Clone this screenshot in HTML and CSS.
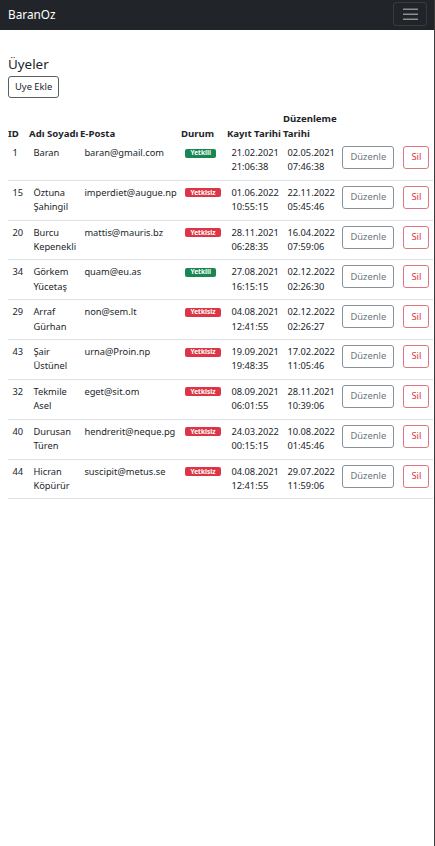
FILE: index.html
```html
<!DOCTYPE html>
<html lang="tr">
<head>
<meta charset="utf-8">
<title>BaranOz</title>
<link rel="stylesheet" href="styles.css">
</head>
<body>
<nav class="navbar">
  <span class="brand">BaranOz</span>
  <button class="toggler" type="button" aria-label="Menü">
    <svg width="15" height="12" viewBox="0 0 15 12"><path d="M0 1.3h15M0 6.3h15M0 11.3h15" stroke="#8b8d90" stroke-width="1.6"/></svg>
  </button>
</nav>
<main class="container">
  <h4 class="title">Üyeler</h4>
  <button class="btn btn-dark-outline" type="button">Uye Ekle</button>
  <table class="table">
    <colgroup>
      <col class="c-id"><col class="c-name"><col class="c-mail"><col class="c-state"><col class="c-date"><col class="c-date2"><col class="c-edit"><col class="c-del">
    </colgroup>
    <thead>
      <tr>
        <th>ID</th><th>Adı Soyadı</th><th>E-Posta</th><th>Durum</th><th>Kayıt Tarihi</th><th class="wrap">Düzenleme Tarihi</th><th></th><th></th>
      </tr>
    </thead>
    <tbody>
      <tr><td>1</td><td>Baran</td><td class="nw">baran@gmail.com</td><td><span class="badge ok">Yetkili</span></td><td class="nw">21.02.2021<br>21:06:38</td><td class="nw">02.05.2021<br>07:46:38</td><td><button class="btn btn-grey" type="button">Düzenle</button></td><td><button class="btn btn-red" type="button">Sil</button></td></tr>
      <tr><td>15</td><td>Öztuna Şahingil</td><td class="nw">imperdiet@augue.np</td><td><span class="badge no">Yetkisiz</span></td><td class="nw">01.06.2022<br>10:55:15</td><td class="nw">22.11.2022<br>05:45:46</td><td><button class="btn btn-grey" type="button">Düzenle</button></td><td><button class="btn btn-red" type="button">Sil</button></td></tr>
      <tr><td>20</td><td>Burcu Kepenekli</td><td class="nw">mattis@mauris.bz</td><td><span class="badge no">Yetkisiz</span></td><td class="nw">28.11.2021<br>06:28:35</td><td class="nw">16.04.2022<br>07:59:06</td><td><button class="btn btn-grey" type="button">Düzenle</button></td><td><button class="btn btn-red" type="button">Sil</button></td></tr>
      <tr><td>34</td><td>Görkem Yücetaş</td><td class="nw">quam@eu.as</td><td><span class="badge ok">Yetkili</span></td><td class="nw">27.08.2021<br>16:15:15</td><td class="nw">02.12.2022<br>02:26:30</td><td><button class="btn btn-grey" type="button">Düzenle</button></td><td><button class="btn btn-red" type="button">Sil</button></td></tr>
      <tr><td>29</td><td>Arraf Gürhan</td><td class="nw">non@sem.lt</td><td><span class="badge no">Yetkisiz</span></td><td class="nw">04.08.2021<br>12:41:55</td><td class="nw">02.12.2022<br>02:26:27</td><td><button class="btn btn-grey" type="button">Düzenle</button></td><td><button class="btn btn-red" type="button">Sil</button></td></tr>
      <tr><td>43</td><td>Şair Üstünel</td><td class="nw">urna@Proin.np</td><td><span class="badge no">Yetkisiz</span></td><td class="nw">19.09.2021<br>19:48:35</td><td class="nw">17.02.2022<br>11:05:46</td><td><button class="btn btn-grey" type="button">Düzenle</button></td><td><button class="btn btn-red" type="button">Sil</button></td></tr>
      <tr><td>32</td><td>Tekmile Asel</td><td class="nw">eget@sit.om</td><td><span class="badge no">Yetkisiz</span></td><td class="nw">08.09.2021<br>06:01:55</td><td class="nw">28.11.2021<br>10:39:06</td><td><button class="btn btn-grey" type="button">Düzenle</button></td><td><button class="btn btn-red" type="button">Sil</button></td></tr>
      <tr><td>40</td><td>Durusan Türen</td><td class="nw">hendrerit@neque.pg</td><td><span class="badge no">Yetkisiz</span></td><td class="nw">24.03.2022<br>00:15:15</td><td class="nw">10.08.2022<br>01:45:46</td><td><button class="btn btn-grey" type="button">Düzenle</button></td><td><button class="btn btn-red" type="button">Sil</button></td></tr>
      <tr><td>44</td><td>Hicran Köpürür</td><td class="nw">suscipit@metus.se</td><td><span class="badge no">Yetkisiz</span></td><td class="nw">04.08.2021<br>12:41:55</td><td class="nw">29.07.2022<br>11:59:06</td><td><button class="btn btn-grey" type="button">Düzenle</button></td><td><button class="btn btn-red" type="button">Sil</button></td></tr>
    </tbody>
  </table>
</main>
</body>
</html>
```

FILE: styles.css
```css
* { box-sizing: border-box; }
html, body { margin: 0; padding: 0; }
body {
  font-family: "Segoe UI", "Noto Sans", "Open Sans", sans-serif;
  font-size: 9.6px;
  line-height: 1.5;
  color: #212529;
  background: #fff;
  min-height: 100vh;
  border-right: 1px solid #3c3c3c;
}
.navbar {
  height: 30px;
  background: #212529;
  display: flex;
  align-items: flex-start;
  justify-content: space-between;
  padding: 2px 7px 0 8px;
}
.brand {
  color: #fff;
  font-size: 11.8px;
  line-height: 24px;
}
.toggler {
  width: 34px;
  height: 24px;
  padding: 0;
  background: transparent;
  border: 1px solid rgba(255, 255, 255, 0.1);
  border-radius: 3px;
  display: flex;
  align-items: center;
  justify-content: center;
}
.toggler svg { display: block; }
.container {
  padding: 0 8px;
}
.title {
  font-size: 13.4px;
  font-weight: 400;
  line-height: 17px;
  margin: 26px 0 3px;
}
.btn {
  display: inline-block;
  font-family: inherit;
  font-size: 9.4px;
  line-height: 14.4px;
  padding: 3px 7px;
  background: transparent;
  border: 1px solid;
  border-radius: 3px;
  cursor: pointer;
}
.btn-dark-outline {
  color: #212529;
  border-color: #5a5e63;
  padding: 3px 6px;
  height: 22px;
}
.btn-grey { color: #6c757d; border-color: #8a9096; vertical-align: top; height: 23px; padding: 3px 7px; }
.btn-red { color: #dc3545; border-color: #e07580; vertical-align: top; height: 23px; padding: 3px 7px; }
.table {
  margin-top: 13px;
  width: 425px;
  table-layout: fixed;
  border-collapse: collapse;
}
.c-id { width: 21px; }
.c-name { width: 51px; }
.c-mail { width: 101px; }
.c-state { width: 46px; }
.c-date { width: 56px; }
.c-date2 { width: 55px; }
.c-edit { width: 61px; }
.c-del { width: 34px; }
.table th {
  text-align: left;
  font-weight: 700;
  font-size: 9.6px;
  padding: 0;
  vertical-align: bottom;
  white-space: nowrap;
  line-height: 15px;
}
.table th.wrap { white-space: normal; }
.table td {
  font-size: 9.3px;
  line-height: 14.4px;
  padding: 5px 4px 5px 4.4px;
  vertical-align: top;
  border-bottom: 1px solid #dee2e6;
}
.nw { white-space: nowrap; }
.badge {
  display: inline-block;
  font-size: 6.6px;
  font-weight: 700;
  line-height: 6px;
  padding: 1.5px 5px;
  border-radius: 2px;
  color: #fff;
  vertical-align: 1px;
}
.badge.ok { background: #198754; }
.badge.no { background: #dc3545; }
```
